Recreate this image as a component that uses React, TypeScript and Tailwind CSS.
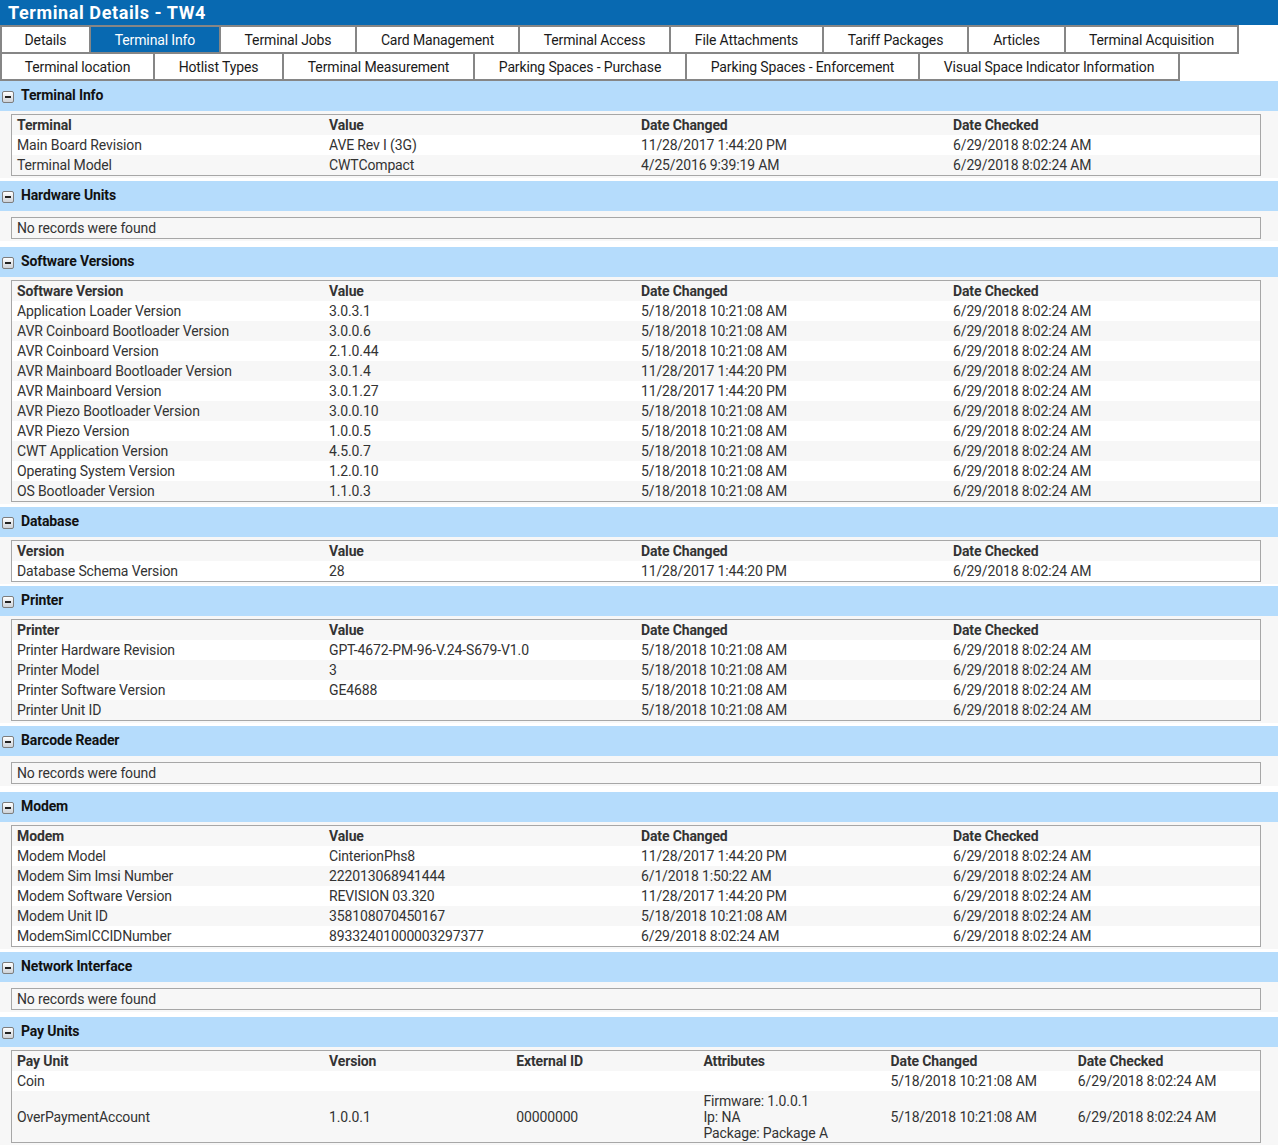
const tabsTop: [string, string][] = [
  ["Details", "w-[91px]"],
  ["Terminal Info", "w-[132px]"],
  ["Terminal Jobs", "w-[138px]"],
  ["Card Management", "w-[165px]"],
  ["Terminal Access", "w-[153px]"],
  ["File Attachments", "w-[155px]"],
  ["Tariff Packages", "w-[147px]"],
  ["Articles", "w-[99px]"],
  ["Terminal Acquisition", "w-[175px]"],
];

const tabsBottom: [string, string][] = [
  ["Terminal location", "w-[155px]"],
  ["Hotlist Types", "w-[131px]"],
  ["Terminal Measurement", "w-[193px]"],
  ["Parking Spaces - Purchase", "w-[214px]"],
  ["Parking Spaces - Enforcement", "w-[235px]"],
  ["Visual Space Indicator Information", "w-[262px]"],
];

type Section = {
  title: string;
  head?: string[];
  rows?: string[][];
  gap?: string;
};

const A = "6/29/2018 8:02:24 AM";
const M = "5/18/2018 10:21:08 AM";
const N = "11/28/2017 1:44:20 PM";

const sections: Section[] = [
  {
    title: "Terminal Info",
    head: ["Terminal", "Value", "Date Changed", "Date Checked"],
    rows: [
      ["Main Board Revision", "AVE Rev I (3G)", N, A],
      ["Terminal Model", "CWTCompact", "4/25/2016 9:39:19 AM", A],
    ],
  },
  { title: "Hardware Units" },
  {
    title: "Software Versions",
    head: ["Software Version", "Value", "Date Changed", "Date Checked"],
    rows: [
      ["Application Loader Version", "3.0.3.1", M, A],
      ["AVR Coinboard Bootloader Version", "3.0.0.6", M, A],
      ["AVR Coinboard Version", "2.1.0.44", M, A],
      ["AVR Mainboard Bootloader Version", "3.0.1.4", N, A],
      ["AVR Mainboard Version", "3.0.1.27", N, A],
      ["AVR Piezo Bootloader Version", "3.0.0.10", M, A],
      ["AVR Piezo Version", "1.0.0.5", M, A],
      ["CWT Application Version", "4.5.0.7", M, A],
      ["Operating System Version", "1.2.0.10", M, A],
      ["OS Bootloader Version", "1.1.0.3", M, A],
    ],
  },
  {
    title: "Database",
    head: ["Version", "Value", "Date Changed", "Date Checked"],
    rows: [["Database Schema Version", "28", N, A]],
    gap: "mb-[2px]",
  },
  {
    title: "Printer",
    head: ["Printer", "Value", "Date Changed", "Date Checked"],
    rows: [
      ["Printer Hardware Revision", "GPT-4672-PM-96-V.24-S679-V1.0", M, A],
      ["Printer Model", "3", M, A],
      ["Printer Software Version", "GE4688", M, A],
      ["Printer Unit ID", "", M, A],
    ],
  },
  { title: "Barcode Reader" },
  {
    title: "Modem",
    head: ["Modem", "Value", "Date Changed", "Date Checked"],
    rows: [
      ["Modem Model", "CinterionPhs8", N, A],
      ["Modem Sim Imsi Number", "222013068941444", "6/1/2018 1:50:22 AM", A],
      ["Modem Software Version", "REVISION 03.320", N, A],
      ["Modem Unit ID", "358108070450167", M, A],
      ["ModemSimICCIDNumber", "89332401000003297377", A, A],
    ],
  },
  { title: "Network Interface", gap: "mb-[5px]" },
];

function CollapseIcon() {
  return (
    <span className="flex h-[12px] w-[12px] items-center justify-center rounded-[2px] border border-[#7d7d7d] bg-linear-to-b from-white to-[#cdd2d8]">
      <span className="h-[2px] w-[6px] bg-[#222]" />
    </span>
  );
}

function SectionHeader({ title }: { title: string }) {
  return (
    <div className="flex h-[30px] items-center bg-[#b5dcfc] pb-[1px] pl-[2px]">
      <span className="mt-[2px]">
        <CollapseIcon />
      </span>
      <span className="ml-[7px] text-[14px] font-bold text-[#111]">{title}</span>
    </div>
  );
}

function DataTable({ head, rows }: { head: string[]; rows: string[][] }) {
  return (
    <div className="border border-[#a7a7a7]">
      <table className="w-full table-fixed border-collapse text-[14px] leading-[20px] text-[#333]">
        <thead>
          <tr className="bg-[#f7f7f7]">
            {head.map((h) => (
              <th key={h} className="h-[20px] pl-[5px] text-left font-bold">
                {h}
              </th>
            ))}
          </tr>
        </thead>
        <tbody>
          {rows.map((r, i) => (
            <tr key={i} className={i % 2 === 0 ? "bg-white" : "bg-[#f7f7f7]"}>
              {r.map((c, j) => (
                <td key={j} className="h-[20px] truncate pl-[5px]">
                  {c}
                </td>
              ))}
            </tr>
          ))}
        </tbody>
      </table>
    </div>
  );
}

function PayUnits() {
  const head = ["Pay Unit", "Version", "External ID", "Attributes", "Date Changed", "Date Checked"];
  return (
    <div className="border border-[#a7a7a7]">
      <table className="w-full table-fixed border-collapse text-[14px] leading-[20px] text-[#333]">
        <colgroup>
          <col className="w-[25%]" />
          <col className="w-[15%]" />
          <col className="w-[15%]" />
          <col className="w-[15%]" />
          <col className="w-[15%]" />
          <col className="w-[15%]" />
        </colgroup>
        <thead>
          <tr className="bg-[#f7f7f7]">
            {head.map((h) => (
              <th key={h} className="h-[20px] pl-[5px] text-left font-bold">
                {h}
              </th>
            ))}
          </tr>
        </thead>
        <tbody>
          <tr className="bg-white">
            <td className="h-[20px] pl-[5px]">Coin</td>
            <td className="pl-[5px]" />
            <td className="pl-[5px]" />
            <td className="pl-[5px]" />
            <td className="pl-[5px]">{M}</td>
            <td className="pl-[5px]">{A}</td>
          </tr>
          <tr className="bg-[#f7f7f7]">
            <td className="pl-[5px]">OverPaymentAccount</td>
            <td className="pl-[5px]">1.0.0.1</td>
            <td className="pl-[5px]">00000000</td>
            <td className="pb-[1px] pl-[5px] pt-[2px] leading-[16px]">
              Firmware: 1.0.0.1
              <br />
              Ip: NA
              <br />
              Package: Package A
            </td>
            <td className="pl-[5px]">{M}</td>
            <td className="pl-[5px]">{A}</td>
          </tr>
        </tbody>
      </table>
    </div>
  );
}

function Tab({ label, width, active }: { label: string; width: string; active?: boolean }) {
  return (
    <div
      className={`-ml-[2px] flex h-[29px] shrink-0 items-center justify-center border-2 border-[#868686] pt-[1px] text-[14px] first:ml-0 ${width} ${
        active ? "bg-[#0869b1] text-white" : "bg-white text-[#1a1a1a]"
      }`}
    >
      {label}
    </div>
  );
}

export default function App() {
  return (
    <div className="min-h-[1148px] w-[1278px] bg-white font-[Roboto,sans-serif] tracking-[-0.13px]">
      <div className="flex h-[25px] items-center bg-[#0869b1] pl-[8px] text-[18px] font-bold tracking-[0.6px] text-white">
        Terminal Details - TW4
      </div>

      <div className="flex">
        {tabsTop.map(([label, w]) => (
          <Tab key={label} label={label} width={w} active={label === "Terminal Info"} />
        ))}
      </div>
      <div className="-mt-[2px] flex">
        {tabsBottom.map(([label, w]) => (
          <Tab key={label} label={label} width={w} />
        ))}
      </div>

      {sections.map((s) => (
        <div key={s.title}>
          <SectionHeader title={s.title} />
          {s.head && s.rows ? (
            <div className={`${s.gap ?? "mb-[3px]"} bg-[#f7f7f7] pb-[2px] pl-[11px] pr-[17px] pt-[3px]`}>
              <DataTable head={s.head} rows={s.rows} />
            </div>
          ) : (
            <div className={`${s.gap ?? "mb-[6px]"} bg-[#f7f7f7] pb-[2px] pl-[11px] pr-[17px] pt-[6px]`}>
              <div className="h-[22px] border border-[#a7a7a7] pl-[5px] text-[14px] leading-[20px] text-[#333]">
                No records were found
              </div>
            </div>
          )}
        </div>
      ))}

      <SectionHeader title="Pay Units" />
      <div className="bg-[#f7f7f7] pb-[2px] pl-[11px] pr-[17px] pt-[3px]">
        <PayUnits />
      </div>
    </div>
  );
}
